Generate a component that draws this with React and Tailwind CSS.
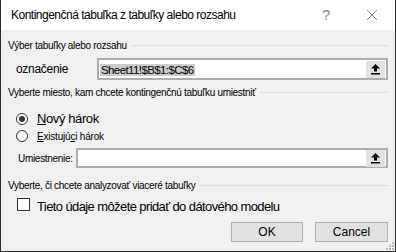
import React from 'react';

const font = { fontFamily: '"Liberation Sans", Arial, sans-serif' };

function UpArrow() {
  return (
    <svg width="11" height="12" viewBox="0 0 11 12">
      <path d="M5.5 1 L10 5.5 L7 5.5 L7 8.5 L4 8.5 L4 5.5 L1 5.5 Z" fill="#000" />
      <rect x="1" y="10" width="9" height="1.5" fill="#000" />
    </svg>
  );
}

function SectionHeader({ children }) {
  return (
    <div className="flex h-[14px] items-center gap-1 pl-[7px] pr-[7px]">
      <span className="whitespace-nowrap text-[10px] tracking-[-0.3px] text-black">{children}</span>
      <div className="h-px flex-1 bg-[#dcdcdc]" />
    </div>
  );
}

function RefInput({ value }) {
  return (
    <div className="flex h-full flex-1 items-center border-2 border-[#adadad] bg-white pl-[1px] pr-[1px]">
      <div className="flex-1">
        {value ? (
          <span className="bg-[#cccccc] px-px text-[11.5px] leading-[18px] tracking-[-0.6px] text-black">{value}</span>
        ) : null}
      </div>
      <div className="flex h-[17px] w-[19px] items-center justify-center bg-[#e1e1e1]">
        <UpArrow />
      </div>
    </div>
  );
}

function Grip() {
  const dots = [
    [7, 1], [4, 4], [7, 4], [1, 7], [4, 7], [7, 7],
  ];
  return (
    <svg width="9" height="9" viewBox="0 0 9 9" className="absolute bottom-px right-px">
      {dots.map(([x, y]) => (
        <rect key={`${x}-${y}`} x={x} y={y} width="2" height="2" fill="#b8b8b8" />
      ))}
    </svg>
  );
}

export default function App() {
  return (
    <div style={font} className="relative flex h-[252px] w-[396px] flex-col border-x border-b border-[#2b2b2b] bg-[#f0f0f0]">
      <div className="flex h-[30px] items-center bg-white pl-[10px] text-[12px] text-black">
        <span className="flex-1 tracking-[-0.5px]">Kontingenčná tabuľka z tabuľky alebo rozsahu</span>
        <span className="w-[44px] text-[15px] font-light text-[#8a8a8a]">?</span>
        <svg width="12" height="12" viewBox="0 0 12 12" className="mr-[17px]">
          <path d="M1 1 L11 11 M11 1 L1 11" stroke="#8a8a8a" strokeWidth="1" />
        </svg>
      </div>

      <div className="mt-[8px]">
        <SectionHeader>Výber tabuľky alebo rozsahu</SectionHeader>
      </div>
      <div className="mt-[6px] flex h-[22px] items-center pr-[7px]">
        <span className="w-[96px] pl-[15px] text-[12px] tracking-[-0.3px] text-black">označenie</span>
        <RefInput value="Sheet11!$B$1:$C$6" />
      </div>

      <div className="mt-[5px]">
        <SectionHeader>Vyberte miesto, kam chcete kontingenčnú tabuľku umiestniť</SectionHeader>
      </div>

      <div className="mt-[11px] flex h-[18px] items-center pl-[15px]">
        <div className="flex h-[12px] w-[12px] items-center justify-center rounded-full border border-[#333] bg-white">
          <div className="h-[6px] w-[6px] rounded-full bg-[#333]" />
        </div>
        <span className="ml-[9px] text-[13px] tracking-[-0.4px] text-black">
          <span className="underline">N</span>ový hárok
        </span>
      </div>
      <div className="flex h-[16px] items-center pl-[15px]">
        <div className="h-[12px] w-[12px] rounded-full border border-[#333] bg-white" />
        <span className="ml-[9px] text-[10px] tracking-[-0.2px] text-black">
          <span className="underline">E</span>xistujú<span className="underline">c</span>i hárok
        </span>
      </div>

      <div className="mt-[4px] flex h-[20px] items-center pr-[7px]">
        <span className="w-[75px] pl-[17px] text-[10px] tracking-[-0.3px] text-black">Umiestnenie:</span>
        <RefInput />
      </div>

      <div className="mt-[10px]">
        <SectionHeader>Vyberte, či chcete analyzovať viaceré tabuľky</SectionHeader>
      </div>

      <div className="mt-[4px] flex h-[16px] items-center pl-[16px]">
        <div className="h-[13px] w-[13px] border border-[#333] bg-white" />
        <span className="ml-[7px] mt-[6px] text-[13px] tracking-[-0.6px] text-black">Tieto údaje môžete pridať do dátového modelu</span>
      </div>

      <div className="mt-[10px] flex justify-end gap-[12px] pr-[7px]">
        <button className="h-[20px] w-[72px] border border-[#adadad] bg-[#e1e1e1] text-[12px] text-black">OK</button>
        <button className="h-[20px] w-[73px] border border-[#adadad] bg-[#e1e1e1] text-[12px] text-black">Cancel</button>
      </div>

      <Grip />
    </div>
  );
}
